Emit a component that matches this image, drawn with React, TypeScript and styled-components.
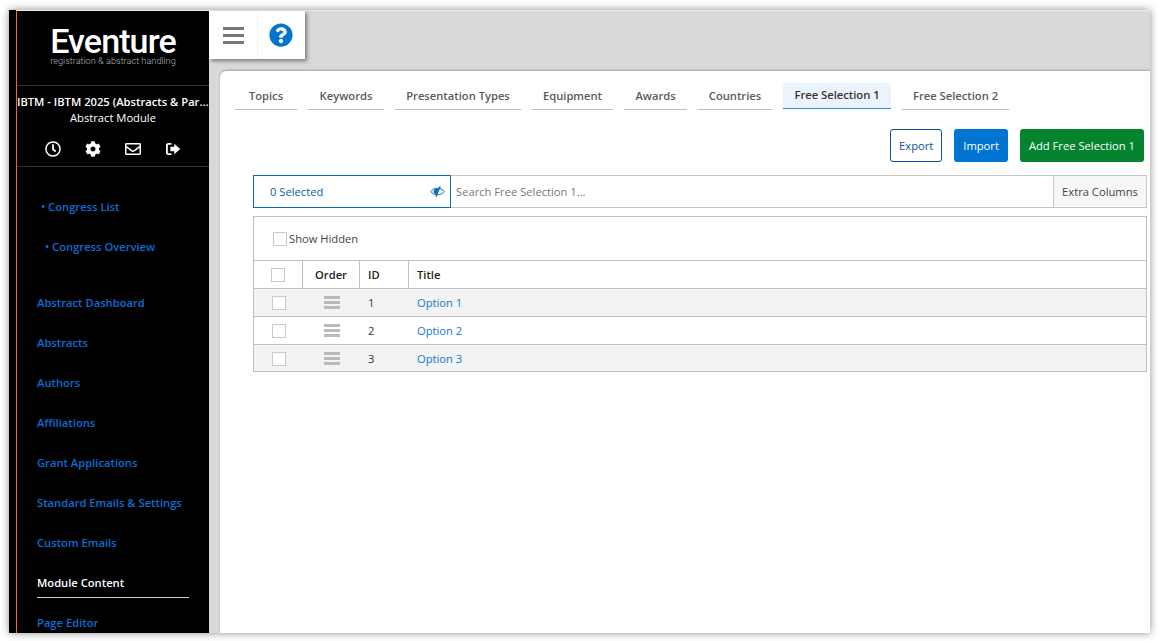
import React from "react";
import styled, { createGlobalStyle } from "styled-components";
import { FaCog, FaQuestionCircle, FaRegClock, FaRegEnvelope } from "react-icons/fa";

const GlobalStyle = createGlobalStyle`
    html, body {
        margin: 0;
        background: #fff;
        overflow: hidden;
    }
    body {
        font-family: "Open Sans", "Noto Sans", sans-serif;
    }
`;

const Page = styled.div`
    width: 1158px;
    height: 641px;
    padding: 10px 8px 8px 9px;
    box-sizing: border-box;
`;

const Frame = styled.div`
    display: flex;
    height: 623px;
    box-shadow: 0 0 8px rgba(0, 0, 0, 0.45);
    overflow: hidden;
`;

const Sidebar = styled.aside`
    width: 200px;
    flex: none;
    background: #000;
    padding-left: 7px;
    box-sizing: border-box;
    overflow: hidden;
`;

const SidebarInner = styled.div`
    border-left: 1px solid #f26a21;
    border-top: 1px solid #f3e4ee;
    height: 100%;
    color: #fff;
`;

const Brand = styled.div`
    height: 75px;
    box-sizing: border-box;
    border-bottom: 1px solid #333;
    display: flex;
    flex-direction: column;
    align-items: center;
    padding-top: 15px;
`;

const BrandName = styled.div`
    font-family: Roboto, sans-serif;
    font-weight: 500;
    font-size: 34px;
    line-height: 30px;
    letter-spacing: -0.9px;
    color: #fff;
`;

const BrandTag = styled.div`
    font-family: Roboto, sans-serif;
    font-weight: 300;
    font-size: 9.2px;
    line-height: 9px;
    color: #b5b5b5;
`;

const Congress = styled.div`
    border-bottom: 1px solid #333;
    height: 81px;
    box-sizing: border-box;
    text-align: center;
`;

const CongressName = styled.div`
    font-size: 11.2px;
    font-weight: 600;
    line-height: 16px;
    padding-top: 8px;
    white-space: nowrap;
    overflow: hidden;
    text-overflow: ellipsis;
`;

const CongressModule = styled.div`
    font-size: 11.2px;
    line-height: 16px;
`;

const IconRow = styled.div`
    display: flex;
    justify-content: center;
    gap: 24px;
    margin-top: 15px;
    height: 16px;
    align-items: center;

    > svg {
        width: 16px;
        height: 16px;
    }
`;

const Nav = styled.nav`
    display: flex;
    flex-direction: column;
    padding-top: 20px;
`;

const NavItem = styled.a<{ $indent?: number; $active?: boolean; $gapAfter?: number }>`
    display: block;
    height: 40px;
    line-height: 40px;
    font-size: 11.2px;
    font-weight: 600;
    color: ${(p) => (p.$active ? "#fff" : "#0a6ed1")};
    padding-left: ${(p) => p.$indent ?? 20}px;
    margin-bottom: ${(p) => p.$gapAfter ?? 0}px;
    white-space: nowrap;
`;

const ActiveRule = styled.div`
    height: 1px;
    width: 152px;
    margin: -6px 0 5px 20px;
    background: #ccc;
`;

const Main = styled.main`
    flex: 1;
    min-width: 0;
    background: #d9d9d9;
    border-top: 1px solid #f3e4ee;
    display: flex;
    flex-direction: column;
`;

const TopBar = styled.div`
    height: 59px;
    flex: none;
`;

const ToolBox = styled.div`
    width: 96px;
    height: 48px;
    background: #fff;
    display: flex;
    box-shadow: 2px 2px 4px rgba(0, 0, 0, 0.45);
`;

const ToolButton = styled.div<{ $divided?: boolean }>`
    width: 48px;
    display: flex;
    align-items: center;
    justify-content: center;
    border-right: ${(p) => (p.$divided ? "1px solid #f2f2f2" : "none")};
`;

const Burger = styled.div`
    width: 21px;
    height: 17.5px;
    margin: 1px 0 0 1px;
    display: flex;
    flex-direction: column;
    justify-content: space-between;

    > span {
        display: block;
        height: 3.4px;
        background: #777;
    }
`;

const Panel = styled.section`
    flex: 1;
    margin: 1px 0 0 11px;
    background: #fff;
    border-top-left-radius: 6px;
    box-shadow: 0 -1px 2px rgba(0, 0, 0, 0.25);
    padding: 13px 3px 0 15px;
    min-height: 0;
`;

const Tabs = styled.div`
    display: flex;
    gap: 11px;
    height: 26px;
`;

const Tab = styled.div<{ $active?: boolean; $width: number }>`
    width: ${(p) => p.$width}px;
    height: 26px;
    margin-top: ${(p) => (p.$active ? "-1px" : "0")};
    box-sizing: border-box;
    line-height: 24px;
    text-align: center;
    white-space: nowrap;
    font-size: 11.2px;
    font-weight: 600;
    color: ${(p) => (p.$active ? "#333" : "#5a5a5a")};
    background: ${(p) => (p.$active ? "#ebf4fc" : "transparent")};
    border-bottom: 1px solid ${(p) => (p.$active ? "#1a8fe3" : "#bdbdbd")};
    border-radius: ${(p) => (p.$active ? "3px 3px 0 0" : "0")};
`;

const Actions = styled.div`
    display: flex;
    justify-content: flex-end;
    gap: 12px;
    margin-top: 19px;
    padding-right: 3px;
`;

const Button = styled.button<{ $variant: "outline" | "blue" | "green" }>`
    height: 33px;
    padding: 0 8px;
    border-radius: 3px;
    box-sizing: border-box;
    font-family: inherit;
    font-size: 11.2px;
    border: 1px solid
        ${(p) => (p.$variant === "outline" ? "#0b5394" : "transparent")};
    background: ${(p) =>
        p.$variant === "outline" ? "#fff" : p.$variant === "blue" ? "#0074d1" : "#05832f"};
    color: ${(p) => (p.$variant === "outline" ? "#0b5394" : "#fff")};
`;

const FilterRow = styled.div`
    display: flex;
    height: 33px;
    margin: 13px 0 0 18px;
    box-sizing: border-box;
    font-size: 11.2px;
    width: 894px;
`;

const SelectedBox = styled.div`
    width: 198px;
    flex: none;
    box-sizing: border-box;
    border: 1px solid #0b6cb8;
    display: flex;
    align-items: center;
    justify-content: space-between;
    padding: 0 5px 0 16px;
    color: #0b5fa5;
`;

const Search = styled.div`
    flex: 1;
    border: 1px solid #c6c6c6;
    border-left: none;
    display: flex;
    align-items: center;
    padding-left: 5px;
    color: #777;
`;

const ExtraColumns = styled.div`
    width: 94px;
    flex: none;
    box-sizing: border-box;
    border: 1px solid #c6c6c6;
    margin-left: -1px;
    background: #f7f7f7;
    color: #444;
    display: flex;
    align-items: center;
    justify-content: center;
`;

const TableCard = styled.div`
    width: 894px;
    height: 156px;
    overflow: hidden;
    margin: 8px 0 0 18px;
    box-sizing: border-box;
    border: 1px solid #c0c0c0;
    font-size: 11.2px;
    color: #333;
`;

const ShowHidden = styled.label`
    height: 43px;
    display: flex;
    align-items: center;
    gap: 2px;
    padding-left: 19px;
    color: #444;
`;

const Box = styled.span`
    display: block;
    width: 14px;
    height: 14px;
    box-sizing: border-box;
    border: 1px solid #c9c9c9;
    background: #fff;
    flex: none;
`;

const Row = styled.div<{ $shaded?: boolean; $head?: boolean }>`
    display: grid;
    grid-template-columns: 49px 57px 49px 1fr;
    height: 28px;
    box-sizing: border-box;
    border-top: 1px solid #c0c0c0;
    background: ${(p) => (p.$shaded ? "#f3f3f3" : "#fff")};
    font-weight: ${(p) => (p.$head ? 600 : 400)};
    color: ${(p) => (p.$head ? "#222" : "#333")};
`;

const Cell = styled.div<{ $center?: boolean; $divided?: boolean }>`
    display: flex;
    align-items: center;
    justify-content: ${(p) => (p.$center ? "center" : "flex-start")};
    padding-left: ${(p) => (p.$center ? 0 : 8)}px;
    border-right: ${(p) => (p.$divided ? "1px solid #c0c0c0" : "none")};
`;

const Grip = styled.div`
    width: 16px;
    height: 13px;
    display: flex;
    flex-direction: column;
    justify-content: space-between;

    > span {
        display: block;
        height: 3px;
        background: #bbb;
    }
`;

const OptionLink = styled.a`
    color: #1279d4;
`;

const SignOutIcon = () => (
    <svg viewBox="0 0 16 16" fill="#fff">
        <path d="M1 4.2C1 3 2 2 3.2 2H6.5v1.8H3.4c-.4 0-.6.3-.6.6v7.2c0 .3.2.6.6.6h3.1V14H3.2C2 14 1 13 1 11.8z" />
        <path d="M9.2 2.8 15.2 8l-6 5.2v-3H5.4V5.8h3.8z" />
    </svg>
);

const EyeSlashIcon = () => (
    <svg width="15" height="13" viewBox="0 0 15 13">
        <path
            d="M.7 6.5C2.3 4.4 4.7 3.2 7.5 3.2s5.2 1.2 6.8 3.3c-1.6 2.1-4 3.3-6.8 3.3S2.3 8.6.7 6.5z"
            fill="none"
            stroke="#0b6cb8"
            strokeWidth="1"
        />
        <path d="M3.6 6.5C3.6 4.8 5 3.6 6.8 3.4H9L6.6 9.6C4.8 9.3 3.6 8.2 3.6 6.5z" fill="#0b6cb8" />
        <path d="M9.6 1 10.8 1.6 6.6 12 5.4 11.4z" fill="#0b6cb8" />
    </svg>
);

const tabs = [
    { label: "Topics", width: 62 },
    { label: "Keywords", width: 76 },
    { label: "Presentation Types", width: 126 },
    { label: "Equipment", width: 81 },
    { label: "Awards", width: 63 },
    { label: "Countries", width: 74 },
    { label: "Free Selection 1", width: 108 },
    { label: "Free Selection 2", width: 107 },
];

const navItems = [
    "Abstract Dashboard",
    "Abstracts",
    "Authors",
    "Affiliations",
    "Grant Applications",
    "Standard Emails & Settings",
    "Custom Emails",
];

const options = [1, 2, 3];

export default function App() {
    return (
        <Page>
            <GlobalStyle />
            <Frame>
                <Sidebar>
                    <SidebarInner>
                        <Brand>
                            <BrandName>Eventure</BrandName>
                            <BrandTag>registration &amp; abstract handling</BrandTag>
                        </Brand>
                        <Congress>
                            <CongressName>IBTM - IBTM 2025 (Abstracts &amp; Participants)</CongressName>
                            <CongressModule>Abstract Module</CongressModule>
                            <IconRow>
                                <FaRegClock />
                                <FaCog />
                                <FaRegEnvelope />
                                <SignOutIcon />
                            </IconRow>
                        </Congress>
                        <Nav>
                            <NavItem $indent={24}>• Congress List</NavItem>
                            <NavItem $indent={28} $gapAfter={16}>• Congress Overview</NavItem>
                            {navItems.map((item) => (
                                <NavItem key={item}>{item}</NavItem>
                            ))}
                            <NavItem $active>Module Content</NavItem>
                            <ActiveRule />
                            <NavItem>Page Editor</NavItem>
                        </Nav>
                    </SidebarInner>
                </Sidebar>
                <Main>
                    <TopBar>
                        <ToolBox>
                            <ToolButton $divided>
                                <Burger>
                                    <span />
                                    <span />
                                    <span />
                                </Burger>
                            </ToolButton>
                            <ToolButton>
                                <FaQuestionCircle size={24} color="#0074d1" />
                            </ToolButton>
                        </ToolBox>
                    </TopBar>
                    <Panel>
                        <Tabs>
                            {tabs.map((tab) => (
                                <Tab key={tab.label} $width={tab.width} $active={tab.label === "Free Selection 1"}>
                                    {tab.label}
                                </Tab>
                            ))}
                        </Tabs>
                        <Actions>
                            <Button $variant="outline">Export</Button>
                            <Button $variant="blue">Import</Button>
                            <Button $variant="green">Add Free Selection 1</Button>
                        </Actions>
                        <FilterRow>
                            <SelectedBox>
                                0 Selected
                                <EyeSlashIcon />
                            </SelectedBox>
                            <Search>Search Free Selection 1...</Search>
                            <ExtraColumns>Extra Columns</ExtraColumns>
                        </FilterRow>
                        <TableCard>
                            <ShowHidden>
                                <Box />
                                Show Hidden
                            </ShowHidden>
                            <Row $head>
                                <Cell $center $divided>
                                    <Box />
                                </Cell>
                                <Cell $center $divided>Order</Cell>
                                <Cell $divided>ID</Cell>
                                <Cell>Title</Cell>
                            </Row>
                            {options.map((n) => (
                                <Row key={n} $shaded={n % 2 === 1}>
                                    <Cell $center>
                                        <Box />
                                    </Cell>
                                    <Cell $center>
                                        <Grip>
                                            <span />
                                            <span />
                                            <span />
                                        </Grip>
                                    </Cell>
                                    <Cell>{n}</Cell>
                                    <Cell>
                                        <OptionLink>Option {n}</OptionLink>
                                    </Cell>
                                </Row>
                            ))}
                        </TableCard>
                    </Panel>
                </Main>
            </Frame>
        </Page>
    );
}
